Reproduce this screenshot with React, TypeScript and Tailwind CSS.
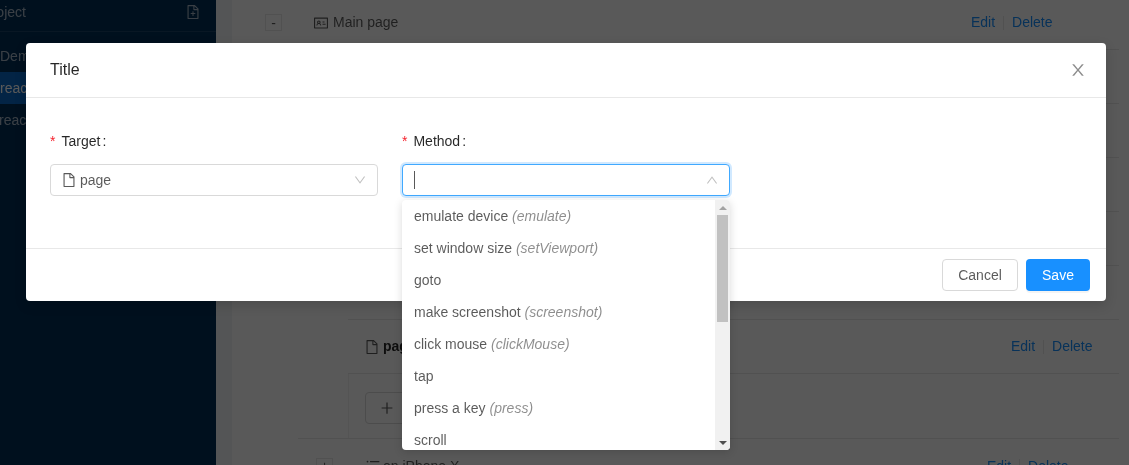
import React from 'react';

const FILE_PATH =
  'M854.6 288.6L639.4 73.4c-6-6-14.1-9.4-22.6-9.4H192c-17.7 0-32 14.3-32 32v832c0 17.7 14.3 32 32 32h640c17.7 0 32-14.3 32-32V311.3c0-8.5-3.4-16.7-9.4-22.7zM790.2 326H602V137.8L790.2 326zm1.8 562H232V136h302v216a42 42 0 0 0 42 42h216v494z';
const FILE_PLUS_PATH =
  'M854.6 288.7L639.4 73.4c-6-6-14.2-9.4-22.7-9.4H192c-17.7 0-32 14.3-32 32v832c0 17.7 14.3 32 32 32h640c17.7 0 32-14.3 32-32V311.3c0-8.5-3.4-16.6-9.4-22.6zM790.2 326H602V137.8L790.2 326zm1.8 562H232V136h302v216a42 42 0 0 0 42 42h216v494zM544 472c0-4.4-3.6-8-8-8h-48c-4.4 0-8 3.6-8 8v108H372c-4.4 0-8 3.6-8 8v48c0 4.4 3.6 8 8 8h108v108c0 4.4 3.6 8 8 8h48c4.4 0 8-3.6 8-8V644h108c4.4 0 8-3.6 8-8v-48c0-4.4-3.6-8-8-8H544V472z';
const DOWN_PATH =
  'M884 256h-75c-5.1 0-9.9 2.5-12.9 6.6L512 654.2 227.9 262.6c-3-4.1-7.8-6.6-12.9-6.6h-75c-6.5 0-10.3 7.4-6.5 12.7l352.6 486.1c12.8 17.6 39 17.6 51.7 0l352.6-486.1c3.9-5.3.1-12.7-6.4-12.7z';
const UP_PATH =
  'M890.5 755.3L537.9 269.2c-12.8-17.6-39-17.6-51.7 0L133.5 755.3A8 8 0 0 0 140 768h75c5.1 0 9.9-2.5 12.9-6.6L512 369.8l284.1 391.6c3 4.1 7.8 6.6 12.9 6.6h75c6.5 0 10.3-7.4 6.5-12.7z';
const CLOSE_PATH =
  'M563.8 512l262.5-312.9c4.4-5.2.7-13.1-6.1-13.1h-79.8c-4.7 0-9.2 2.1-12.3 5.7L511.6 449.8 295.1 191.7c-3-3.6-7.5-5.7-12.3-5.7H203c-6.8 0-10.5 7.9-6.1 13.1L459.4 512 196.9 824.9A7.95 7.95 0 0 0 203 838h79.8c4.7 0 9.2-2.1 12.3-5.7l216.5-258.1 216.5 258.1c3 3.6 7.5 5.7 12.3 5.7h79.8c6.8 0 10.5-7.9 6.1-13.1L563.8 512z';
const PLUS_PATH =
  'M482 152h60q8 0 8 8v704q0 8-8 8h-60q-8 0-8-8V160q0-8 8-8zM176 474h672q8 0 8 8v60q0 8-8 8H176q-8 0-8-8v-60q0-8 8-8z';
const IDCARD_PATH =
  'M928 160H96c-17.7 0-32 14.3-32 32v640c0 17.7 14.3 32 32 32h832c17.7 0 32-14.3 32-32V192c0-17.7-14.3-32-32-32zm-40 632H136V232h752v560zM610.3 476h123.4c1.3 0 2.3-3.6 2.3-8v-48c0-4.4-1-8-2.3-8H610.3c-1.3 0-2.3 3.6-2.3 8v48c0 4.4 1 8 2.3 8zm4.8 144h185.7c3.9 0 7.1-3.6 7.1-8v-48c0-4.4-3.2-8-7.1-8H615.1c-3.9 0-7.1 3.6-7.1 8v48c0 4.4 3.2 8 7.1 8zM224 673h43.9c4.2 0 7.6-3.3 7.9-7.5 3.8-50.5 46-90.5 97.2-90.5s93.4 40 97.2 90.5c.3 4.2 3.7 7.5 7.9 7.5H522a8 8 0 0 0 8-8.4c-2.8-53.3-32-99.7-74.6-126.1a111.8 111.8 0 0 0 29.1-75.5c0-61.9-49.9-112-111.4-112s-111.4 50.1-111.4 112c0 29.1 11 55.5 29.1 75.5a158.09 158.09 0 0 0-74.6 126.1c-.4 4.6 3.2 8.4 7.8 8.4zm149-262c28.5 0 51.7 23.3 51.7 52s-23.2 52-51.7 52-51.7-23.3-51.7-52 23.2-52 51.7-52z';
const LIST_PATH =
  'M912 192H328c-4.4 0-8 3.6-8 8v56c0 4.4 3.6 8 8 8h584c4.4 0 8-3.6 8-8v-56c0-4.4-3.6-8-8-8zm0 284H328c-4.4 0-8 3.6-8 8v56c0 4.4 3.6 8 8 8h584c4.4 0 8-3.6 8-8v-56c0-4.4-3.6-8-8-8zm0 284H328c-4.4 0-8 3.6-8 8v56c0 4.4 3.6 8 8 8h584c4.4 0 8-3.6 8-8v-56c0-4.4-3.6-8-8-8zM104 228a56 56 0 1 0 112 0 56 56 0 1 0-112 0zm0 284a56 56 0 1 0 112 0 56 56 0 1 0-112 0zm0 284a56 56 0 1 0 112 0 56 56 0 1 0-112 0z';

interface IconProps {
  d: string;
  className?: string;
}

const AntIcon = ({ d, className }: IconProps) => (
  <svg viewBox="64 64 896 896" fill="currentColor" className={className}>
    <path d={d} />
  </svg>
);

const Actions = ({ className }: { className: string }) => (
  <div className={`ml-auto flex items-center text-[#1890ff] ${className}`}>
    <span>Edit</span>
    <span className="mx-2 h-[14px] w-px bg-[#e8e8e8]" />
    <span>Delete</span>
  </div>
);

const Toggle = ({ label, className }: { label: string; className: string }) => (
  <span
    className={`flex h-[17px] w-[17px] shrink-0 items-center justify-center border border-[#e8e8e8] bg-white text-[14px] leading-none ${className}`}
  >
    {label}
  </span>
);

const options = [
  { name: 'emulate device', code: 'emulate' },
  { name: 'set window size', code: 'setViewport' },
  { name: 'goto' },
  { name: 'make screenshot', code: 'screenshot' },
  { name: 'click mouse', code: 'clickMouse' },
  { name: 'tap' },
  { name: 'press a key', code: 'press' },
  { name: 'scroll' },
];

const Sidebar = () => (
  <aside className="h-full w-[216px] shrink-0 overflow-hidden bg-[#002e58] text-[14px] text-white/65">
    <div className="flex h-[32px] items-center justify-between border-b border-white/10 pb-[7px] pr-[16px]">
      <span className="-ml-[48px] whitespace-nowrap">New project</span>
      <AntIcon d={FILE_PLUS_PATH} className="h-[14px] w-[14px]" />
    </div>
    <div className="pt-[8px]">
      <div className="flex h-[32px] items-center">Demo</div>
      <div className="-ml-px flex h-[32px] items-center bg-[#0967c5] pl-px text-white">react</div>
      <div className="-ml-px flex h-[32px] items-center">react</div>
    </div>
  </aside>
);

const Content = () => (
  <main className="min-w-0 flex-1 bg-[#f0f2f5] pl-[16px] text-[14px] text-black/65">
    <div className="-mt-[4px] h-[calc(100%+4px)] bg-white pl-[16px] pr-[10px]">
      <div className="flex h-[54px] items-center border-b border-[#e8e8e8] pl-[17px]">
        <Toggle label="-" className="mr-[32px]" />
        <AntIcon d={IDCARD_PATH} className="mr-[5px] h-[14px] w-[14px]" />
        <span>Main page</span>
        <Actions className="pr-[66.5px]" />
      </div>
      <div className="ml-[100px]">
        <div className="h-[54px] border-b border-[#e8e8e8]" />
        <div className="h-[54px] border-b border-[#e8e8e8]" />
        <div className="h-[54px] border-b border-[#e8e8e8]" />
        <div className="h-[54px] border-b border-[#e8e8e8]" />
        <div className="h-[54px] border-b border-[#e8e8e8]" />
        <div className="flex h-[54px] items-center border-b border-[#e8e8e8] pl-[17px]">
          <AntIcon d={FILE_PATH} className="mr-[4px] h-[14px] w-[14px]" />
          <span className="font-bold text-black/85">page</span>
          <Actions className="pr-[26.5px]" />
        </div>
      </div>
      <div className="ml-[50px] h-[65px] border-b border-[#e8e8e8] pl-[50px]">
        <div className="h-full border-l border-[#f0f0f0] pl-[16px] pt-[18px]">
          <button className="flex h-[32px] w-[120px] items-center rounded-[4px] border border-[#d9d9d9] px-[14px] text-black/65">
            <AntIcon d={PLUS_PATH} className="h-[14px] w-[14px]" />
          </button>
        </div>
      </div>
      <div className="flex h-[54px] items-center pl-[68px]">
        <Toggle label="+" className="mr-[33px]" />
        <AntIcon d={LIST_PATH} className="mr-[3px] h-[14px] w-[14px]" />
        <span>on iPhone X</span>
        <Actions className="pr-[50.5px]" />
      </div>
    </div>
  </main>
);

const Label = ({ text }: { text: string }) => (
  <div className="flex h-[38px] items-center pt-[1px] text-[14px] text-black/85">
    <span className="mr-[6px] text-[#f5222d]">*</span>
    <span>{text}</span>
    <span className="ml-[2px]">:</span>
  </div>
);

const Scrollbar = () => (
  <div className="flex h-full w-[15px] shrink-0 flex-col items-center bg-[#f1f1f1]">
    <div className="flex h-[15px] w-full shrink-0 items-center justify-center">
      <svg viewBox="0 0 8 4" className="h-[4px] w-[8px] fill-[#a3a3a3]">
        <polygon points="4,0 8,4 0,4" />
      </svg>
    </div>
    <div className="h-[107px] w-[11px] shrink-0 bg-[#c1c1c1]" />
    <div className="mt-auto flex h-[15px] w-full shrink-0 items-center justify-center">
      <svg viewBox="0 0 8 4" className="h-[4px] w-[8px] fill-[#505050]">
        <polygon points="0,0 8,0 4,4" />
      </svg>
    </div>
  </div>
);

const Modal = () => (
  <div className="w-[1080px] rounded-[4px] bg-white shadow-[0_4px_12px_rgba(0,0,0,0.15)]">
    <div className="flex h-[55px] items-center justify-between border-b border-[#e8e8e8] pl-[24px] pr-[20px]">
      <span className="text-[16px] text-black/85">Title</span>
      <AntIcon d={CLOSE_PATH} className="h-[16px] w-[16px] text-black/45" />
    </div>
    <div className="flex h-[150px] items-start gap-[24px] px-[24px] pt-[24px]">
      <div className="w-[328px]">
        <Label text="Target" />
        <div className="mt-[4px] flex h-[32px] items-center rounded-[4px] border border-[#d9d9d9] bg-white pl-[11px] pr-[11px] text-[14px] text-black/65">
          <AntIcon d={FILE_PATH} className="mr-[4px] h-[14px] w-[14px]" />
          <span>page</span>
          <AntIcon d={DOWN_PATH} className="ml-auto h-[12px] w-[12px] text-black/25" />
        </div>
      </div>
      <div className="relative w-[328px]">
        <Label text="Method" />
        <div className="mt-[4px] flex h-[32px] items-center rounded-[4px] border border-[#40a9ff] bg-white pl-[11px] pr-[11px] shadow-[0_0_0_2px_rgba(24,144,255,0.2)]">
          <span className="h-[18px] w-px bg-black/65" />
          <AntIcon d={UP_PATH} className="ml-auto h-[12px] w-[12px] text-black/25" />
        </div>
        <div className="absolute left-0 top-[78px] z-10 flex h-[250px] w-[328px] overflow-hidden rounded-[4px] bg-white text-[14px] text-black/65 shadow-[0_2px_8px_rgba(0,0,0,0.15)]">
          <div className="min-w-0 flex-1">
            {options.map((option) => (
              <div key={option.name} className="flex h-[32px] shrink-0 items-center whitespace-pre px-[12px]">
                <span>{option.name}</span>
                {option.code && <em className="text-black/45">{` (${option.code})`}</em>}
              </div>
            ))}
          </div>
          <Scrollbar />
        </div>
      </div>
    </div>
    <div className="flex h-[53px] items-center justify-end gap-[8px] border-t border-[#e8e8e8] pr-[16px] text-[14px]">
      <button className="h-[32px] w-[76px] rounded-[4px] border border-[#d9d9d9] bg-white text-black/65">Cancel</button>
      <button className="h-[32px] w-[64px] rounded-[4px] bg-[#1890ff] text-white shadow-[0_2px_0_rgba(0,0,0,0.045)]">Save</button>
    </div>
  </div>
);

const App = () => {
  return (
    <div className="relative flex h-[465px] w-[1129px] overflow-hidden font-['Liberation_Sans',sans-serif] will-change-transform">
      <Sidebar />
      <Content />
      <div className="absolute inset-0 bg-black/65 pl-[26px] pt-[43px]">
        <Modal />
      </div>
    </div>
  );
};

export default App;
